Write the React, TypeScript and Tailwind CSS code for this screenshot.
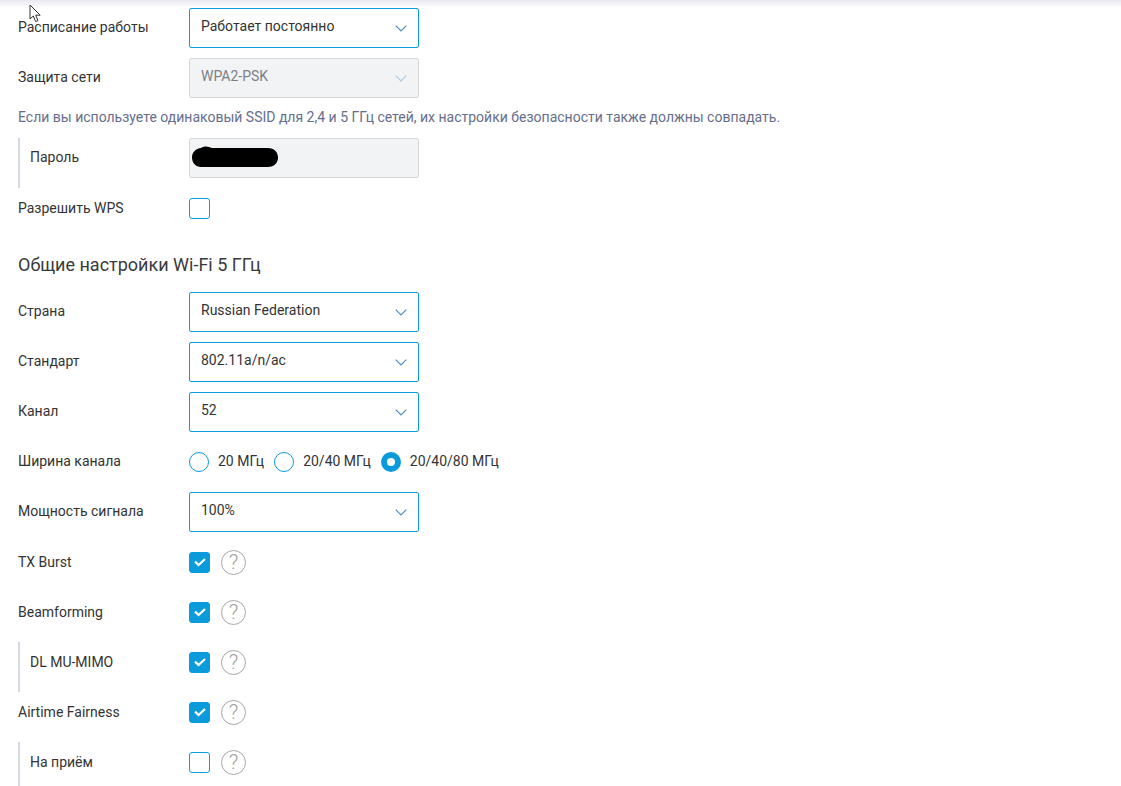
import type { ReactNode } from 'react';

const Chevron = ({ disabled }: { disabled?: boolean }) => (
  <svg width="12" height="7" viewBox="0 0 12 7" fill="none" className={disabled ? 'opacity-40' : ''}>
    <path d="M0.7 0.7L6 6L11.3 0.7" stroke="#4f8cc9" strokeWidth="1.2" />
  </svg>
);

const Select = ({ value, disabled }: { value: string; disabled?: boolean }) => (
  <div
    className={`flex h-10 w-[230px] items-center justify-between rounded-[2px] border pl-[11px] pr-[11px] ${
      disabled ? 'border-[#d5d7db] bg-[#f2f3f5] text-[#7b7f86]' : 'border-[#0b9bdb] bg-white text-[#333333]'
    }`}
  >
    <span className="relative top-[-2px]">{value}</span>
    <Chevron disabled={disabled} />
  </div>
);

const Checkbox = ({ checked }: { checked?: boolean }) => (
  <div
    className={`flex h-[21px] w-[21px] items-center justify-center rounded-[3px] border ${
      checked ? 'border-[#0b9bdb] bg-[#0b9bdb]' : 'border-[#0b9bdb] bg-white'
    }`}
  >
    {checked && (
      <svg width="12" height="9" viewBox="0 0 12 9" fill="none">
        <path d="M1 3.6L4.6 7L11 1" stroke="white" strokeWidth="2.2" />
      </svg>
    )}
  </div>
);

const Help = () => (
  <div className="ml-[11px] flex h-[25px] w-[25px] items-center justify-center rounded-full border border-[#a8a8a8] text-[21px] font-light text-[#a0a0a0]">
    ?
  </div>
);

const Radio = ({ label, checked }: { label: string; checked?: boolean }) => (
  <div className="flex items-center gap-[9px]">
    {checked ? (
      <div className="flex h-5 w-5 items-center justify-center rounded-full bg-[#0b9bdb]">
        <div className="h-2 w-2 rounded-full bg-white" />
      </div>
    ) : (
      <div className="h-5 w-5 rounded-full border border-[#0b9bdb] bg-white" />
    )}
    <span className="relative top-[-1px]">{label}</span>
  </div>
);

const Row = ({ label, raised, children }: { label: string; raised?: boolean; children: ReactNode }) => (
  <div className="mb-2.5 flex h-10 items-center">
    <div className={`w-[171px] shrink-0 ${raised ? 'relative top-[-1px]' : ''}`}>{label}</div>
    {children}
  </div>
);

const SubRow = ({ label, raised, children }: { label: string; raised?: boolean; children: ReactNode }) => (
  <div className="h-[50px] border-l-2 border-[#d5d9e2] pl-[10px]">
    <div className="flex h-10 items-center">
      <div className={`w-[159px] shrink-0 ${raised ? 'relative top-[-1px]' : ''}`}>{label}</div>
      {children}
    </div>
  </div>
);

export default function App() {
  return (
    <div className="relative h-[786px] w-[1121px] overflow-hidden bg-white pl-[18px] pt-2 font-['Roboto',sans-serif] text-sm text-[#333333]">
      <div className="absolute left-0 right-0 top-0 h-2 bg-gradient-to-b from-[#e9e9f3] to-white" />
      <svg className="absolute left-[29px] top-[4px]" width="13" height="20" viewBox="0 0 13 20" fill="white">
        <path d="M1 1V15L4.3 12L6.6 17.6L9 16.6L6.7 11.2H11.2Z" stroke="#333333" strokeWidth="1" />
      </svg>

      <div className="relative">
        <Row label="Расписание работы" raised>
          <Select value="Работает постоянно" />
        </Row>
        <Row label="Защита сети" raised>
          <Select value="WPA2-PSK" disabled />
        </Row>
        <p className="mb-3 h-[18px] leading-[18px] text-[#666e8c]">
          Если вы используете одинаковый SSID для 2,4 и 5 ГГц сетей, их настройки безопасности также должны совпадать.
        </p>
        <SubRow label="Пароль" raised>
          <div className="h-10 w-[230px] rounded-[2px] border border-[#d5d7db] bg-[#f2f3f5] pl-[1px] pt-[7px]">
            <svg width="88" height="22" viewBox="0 0 88 22" fill="black">
              <path d="M1 11.5C1 6 5 2.5 10 2C13 0 17 0 21 2H77C83 2 87 6 87 11.5C87 17 83 21 77 21H10C5 21 1 17 1 11.5Z" />
            </svg>
          </div>
        </SubRow>
        <Row label="Разрешить WPS">
          <Checkbox />
        </Row>

        <h2 className="mb-[15px] mt-[25px] h-[24px] text-lg leading-6 font-normal text-[#3a3a3a]">Общие настройки Wi-Fi 5 ГГц</h2>

        <Row label="Страна" raised>
          <Select value="Russian Federation" />
        </Row>
        <Row label="Стандарт" raised>
          <Select value="802.11a/n/ac" />
        </Row>
        <Row label="Канал" raised>
          <Select value="52" />
        </Row>
        <Row label="Ширина канала" raised>
          <div className="flex items-center gap-[10px]">
            <Radio label="20 МГц" />
            <Radio label="20/40 МГц" />
            <Radio label="20/40/80 МГц" checked />
          </div>
        </Row>
        <Row label="Мощность сигнала" raised>
          <Select value="100%" />
        </Row>
        <Row label="TX Burst">
          <Checkbox checked />
          <Help />
        </Row>
        <Row label="Beamforming">
          <Checkbox checked />
          <Help />
        </Row>
        <SubRow label="DL MU-MIMO">
          <Checkbox checked />
          <Help />
        </SubRow>
        <Row label="Airtime Fairness">
          <Checkbox checked />
          <Help />
        </Row>
        <SubRow label="На приём">
          <Checkbox />
          <Help />
        </SubRow>
      </div>
    </div>
  );
}
